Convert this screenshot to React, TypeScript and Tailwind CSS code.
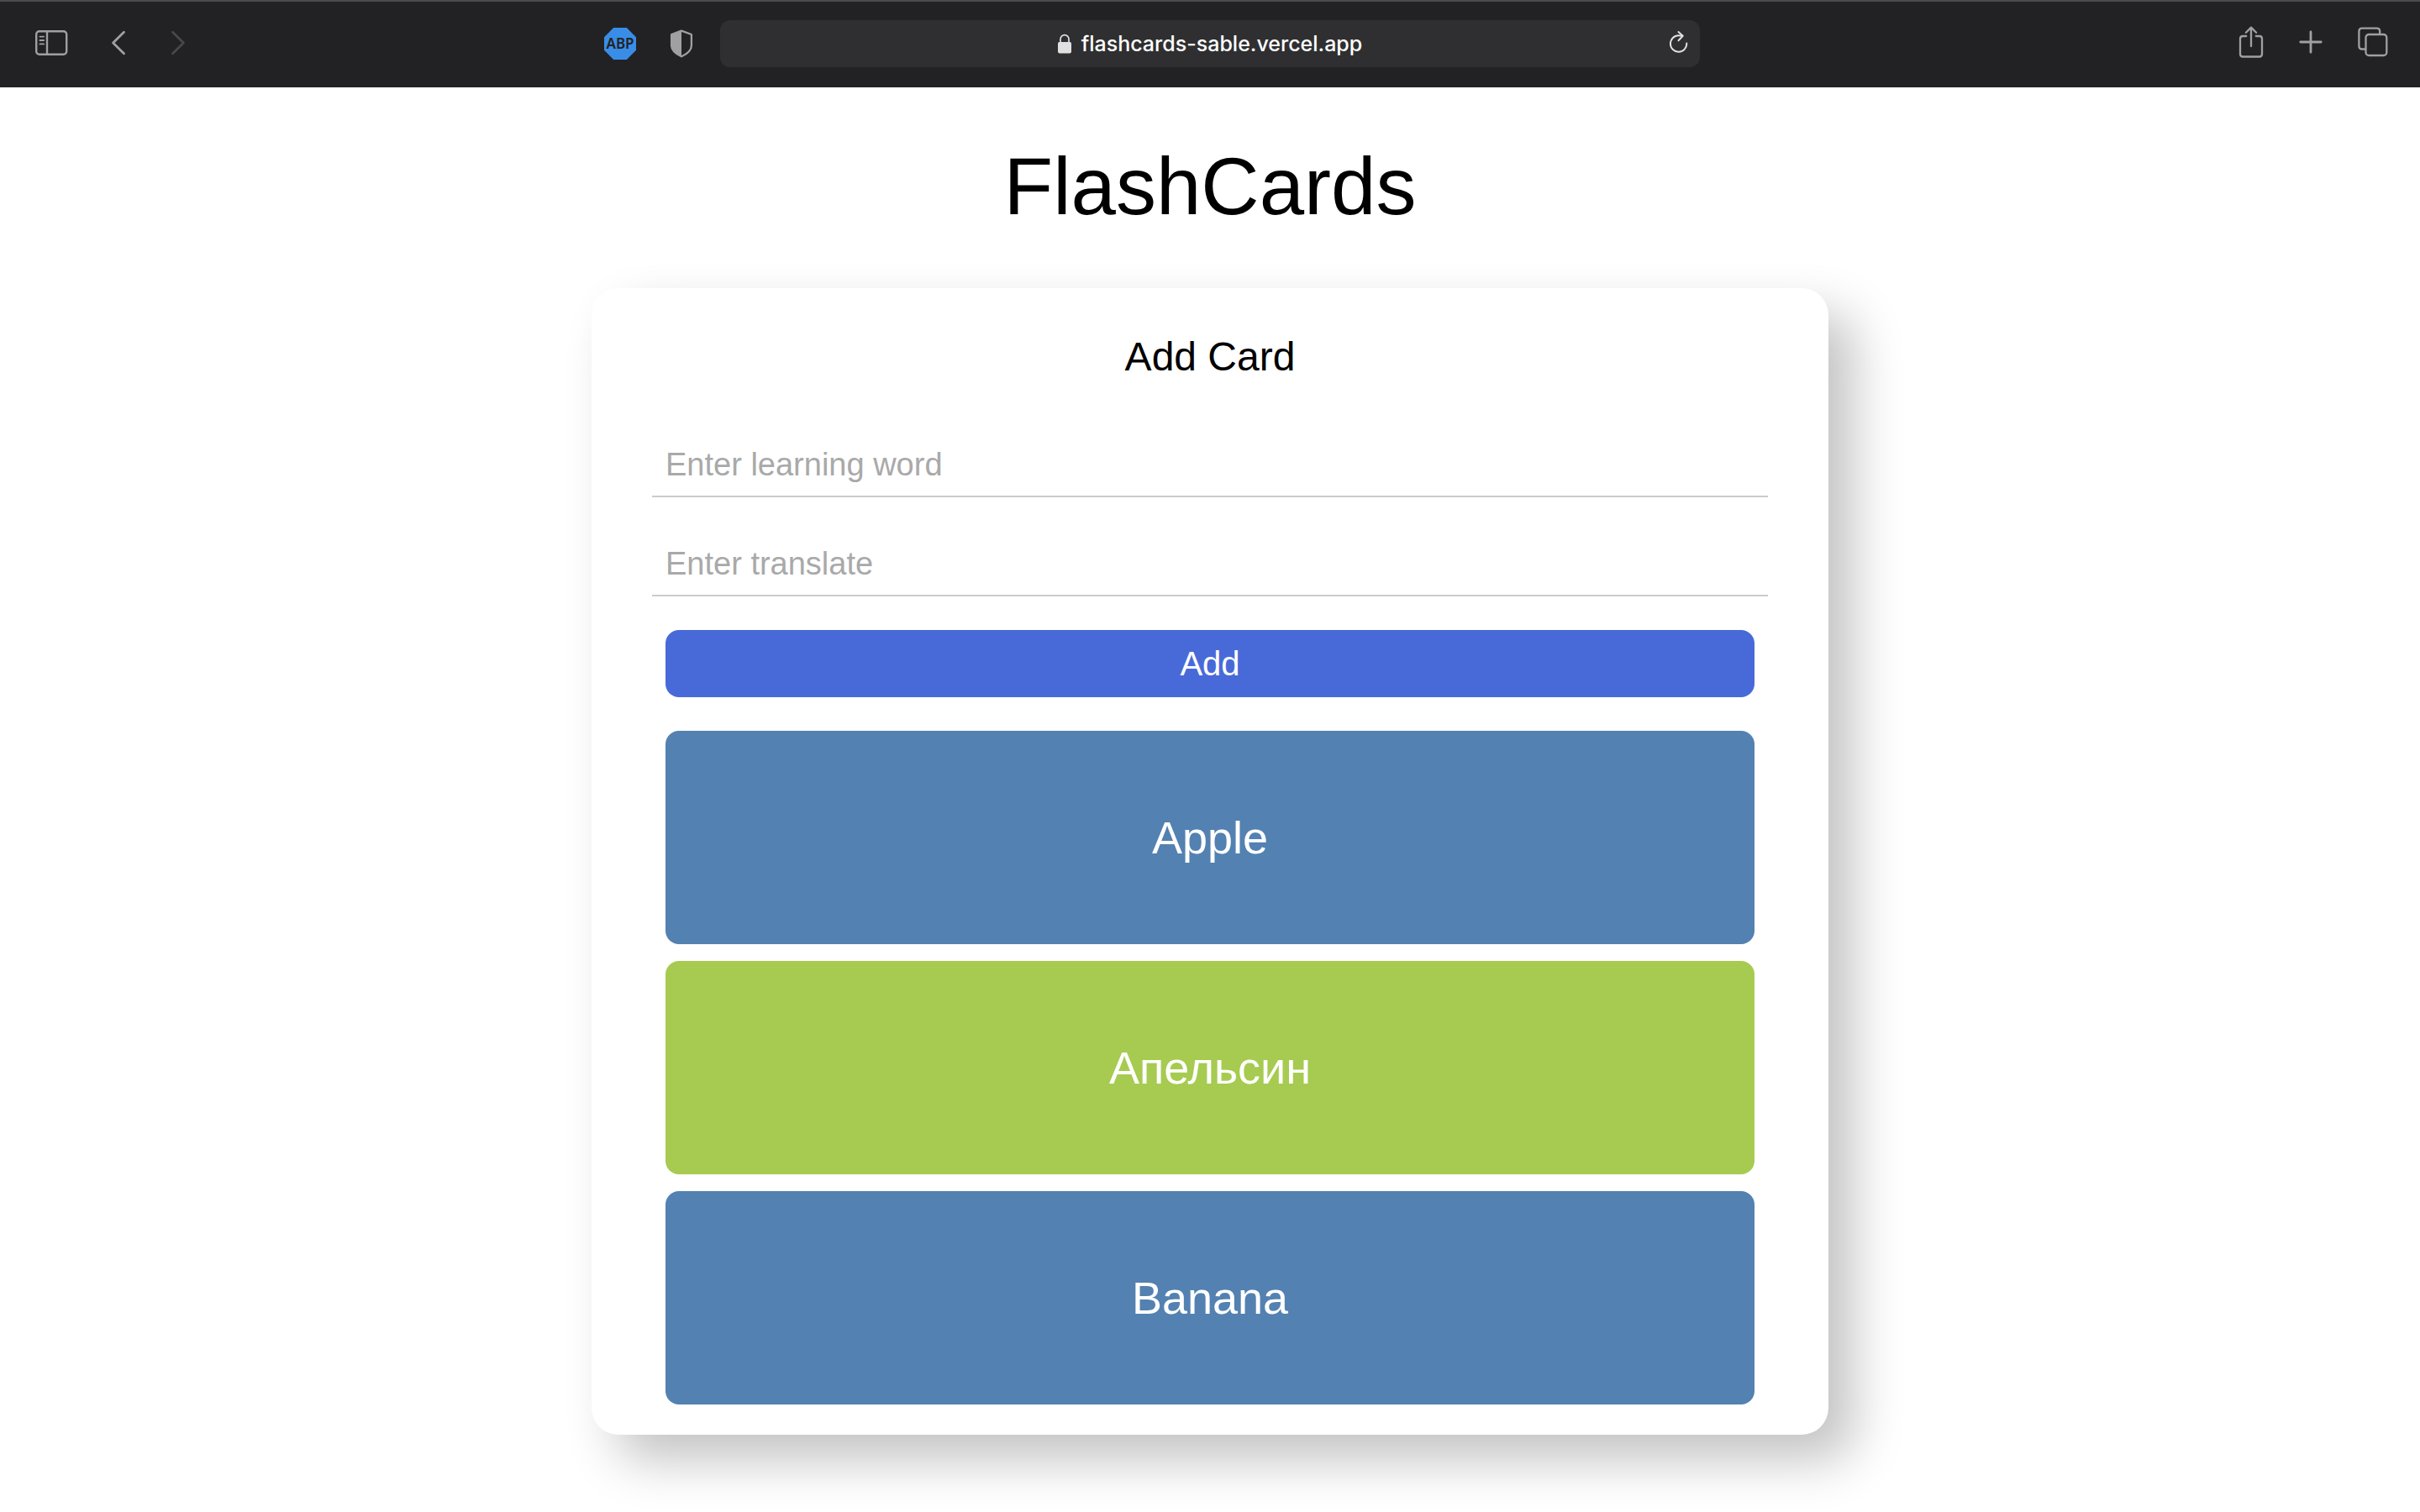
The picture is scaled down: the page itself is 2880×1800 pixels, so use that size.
import { useState } from "react";
import type { FormEvent, ReactNode } from "react";

type Card = { word: string; translation: string; flipped: boolean };

const initialCards: Card[] = [
  { word: "Apple", translation: "Яблоко", flipped: false },
  { word: "Orange", translation: "Апельсин", flipped: true },
  { word: "Banana", translation: "Банан", flipped: false },
];

function IconButton({
  label,
  className = "",
  disabled = false,
  children,
}: {
  label: string;
  className?: string;
  disabled?: boolean;
  children: ReactNode;
}) {
  return (
    <button
      type="button"
      aria-label={label}
      disabled={disabled}
      className={`flex shrink-0 items-center justify-center ${className}`}
    >
      {children}
    </button>
  );
}

function SidebarIcon() {
  return (
    <svg width="40" height="32" viewBox="0 0 40 32" fill="none" stroke="currentColor" strokeWidth="2.4">
      <rect x="2.2" y="2.2" width="36" height="27.6" rx="3.6" />
      <path d="M15 2.5v27" />
      <path d="M6.5 8.6h4.6M6.5 13h4.6M6.5 17.4h4.6" strokeWidth="1.9" strokeLinecap="round" />
    </svg>
  );
}

function ChevronIcon({ direction }: { direction: "left" | "right" }) {
  return (
    <svg width="18" height="32" viewBox="0 0 18 32" fill="none" stroke="currentColor" strokeWidth="2.8" strokeLinecap="round" strokeLinejoin="round">
      <path d={direction === "left" ? "M15.5 3.3 2.6 16l12.9 12.7" : "M2.5 3.3 15.4 16 2.5 28.7"} />
    </svg>
  );
}

function AdBlockIcon() {
  return (
    <svg width="38" height="38" viewBox="0 0 38 38">
      <path d="M11.2 0h15.6L38 11.2v15.6L26.8 38H11.2L0 26.8V11.2z" fill="#398de7" />
      <text
        x="19"
        y="25"
        textAnchor="middle"
        fontFamily="'Noto Sans', sans-serif"
        fontWeight="600"
        fontSize="17"
        fill="#222224"
      >
        ABP
      </text>
    </svg>
  );
}

function ShieldIcon() {
  return (
    <svg width="28" height="34" viewBox="0 0 28 34">
      <path
        d="M14 1.6 25.9 6v13.4c0 5.4-4.6 9.3-11.9 12.9C6.7 28.7 2.1 24.8 2.1 19.4V6z"
        fill="none"
        stroke="currentColor"
        strokeWidth="2.3"
        strokeLinejoin="round"
      />
      <path d="M14 1.6v30.7C6.7 28.7 2.1 24.8 2.1 19.4V6z" fill="currentColor" />
    </svg>
  );
}

function LockIcon() {
  return (
    <svg width="16" height="24" viewBox="0 0 16 24">
      <rect x="0" y="10" width="16" height="13.4" rx="1.8" fill="currentColor" />
      <path d="M3 11V6.6a5 5 0 0 1 10 0V11" fill="none" stroke="currentColor" strokeWidth="1.7" />
    </svg>
  );
}

function ReloadIcon() {
  return (
    <svg width="22" height="28" viewBox="0 0 22 28" fill="none" stroke="currentColor" strokeWidth="2" strokeLinecap="round" strokeLinejoin="round">
      <path d="M20.3 15.5A9.7 9.7 0 1 1 10.6 6.3c1.500 0 3 .1 4.600.5" />
      <path d="M10.500 2l5.200 4.800-5.200 5.400" />
    </svg>
  );
}

function ShareIcon() {
  return (
    <svg width="30" height="38" viewBox="0 0 30 38" fill="none" stroke="currentColor" strokeWidth="2.3" strokeLinecap="round" strokeLinejoin="round">
      <path d="M9.2 12H5.200c-2.200 0-3.200 1-3.200 3.200v18c0 2.200 1 3.300 3.200 3.300h19.600c2.200 0 3.200-1.100 3.200-3.300v-18c0-2.200-1-3.200-3.200-3.200h-4" />
      <path d="M15 24V1.8M8.9 7.700 15 1.600l6.100 6.100" />
    </svg>
  );
}

function PlusIcon() {
  return (
    <svg width="28" height="28" viewBox="0 0 28 28" fill="none" stroke="currentColor" strokeWidth="2.8" strokeLinecap="round">
      <path d="M14 1.8v24.4M1.8 14h24.4" />
    </svg>
  );
}

function TabsIcon() {
  return (
    <svg width="36" height="36" viewBox="0 0 36 36" fill="none" stroke="currentColor" strokeWidth="2.3">
      <rect x="9.5" y="9" width="24.8" height="25" rx="3.8" />
      <path d="M9.500 26.500H5c-2.200 0-3.600-1.300-3.600-3.500V5.200C1.400 3 2.700 1.600 5 1.600h17.600c2.200 0 3.600 1.300 3.600 3.600V9" />
    </svg>
  );
}

function BrowserBar() {
  return (
    <header className="grid h-[104px] grid-cols-[1fr_minmax(0,1166px)_1fr] items-center border-t-2 border-[#4b4b4d] bg-[#222224] pb-0.5 text-[#a0a0a2]">
      <div className="flex items-center pr-8 pl-[41px]">
        <nav aria-label="History" className="flex items-center pb-0.5">
          <IconButton label="Toggle sidebar">
            <SidebarIcon />
          </IconButton>
          <IconButton label="Back" className="ml-[51px]">
            <ChevronIcon direction="left" />
          </IconButton>
          <IconButton label="Forward" className="ml-[53px] text-[#48484a]" disabled>
            <ChevronIcon direction="right" />
          </IconButton>
        </nav>
        <div className="ml-auto flex items-center gap-10">
          <IconButton label="Ad blocker">
            <AdBlockIcon />
          </IconButton>
          <IconButton label="Privacy report">
            <ShieldIcon />
          </IconButton>
        </div>
      </div>

      <div className="grid h-14 grid-cols-[1fr_auto_1fr] items-center rounded-xl bg-[#2f2f31] px-3.5 text-[#e0e0e0]">
        <a
          href="https://flashcards-sable.vercel.app"
          className="col-start-2 flex items-center gap-3 font-['Inter',sans-serif] text-[25px] leading-8 font-medium text-white"
        >
          <span className="text-[#e0e0e0]">
            <LockIcon />
          </span>
          flashcards-sable.vercel.app
        </a>
        <IconButton label="Reload page" className="justify-self-end pb-1">
          <ReloadIcon />
        </IconButton>
      </div>

      <div className="flex items-center justify-end gap-[42px] pr-[38px] pb-1">
        <IconButton label="Share">
          <ShareIcon />
        </IconButton>
        <IconButton label="New tab">
          <PlusIcon />
        </IconButton>
        <IconButton label="Show tabs">
          <TabsIcon />
        </IconButton>
      </div>
    </header>
  );
}

const inputClass =
  "h-[76px] w-full border-b-2 border-[#cbcbcb] bg-transparent px-4 text-[38px] text-black outline-none placeholder:text-[#a9a9a9]";

export default function App() {
  const [cards, setCards] = useState(initialCards);
  const [word, setWord] = useState("");
  const [translation, setTranslation] = useState("");

  const addCard = (event: FormEvent) => {
    event.preventDefault();
    if (!word.trim() || !translation.trim()) return;
    setCards([...cards, { word, translation, flipped: false }]);
    setWord("");
    setTranslation("");
  };

  const flip = (index: number) =>
    setCards(cards.map((card, i) => (i === index ? { ...card, flipped: !card.flipped } : card)));

  return (
    <div className="min-h-screen bg-white font-['Liberation_Sans',Arial,sans-serif] text-black">
      <BrowserBar />
      <main className="flex flex-col items-center px-8 pt-16 pb-20">
        <h1 className="text-[96px] leading-[108px]">FlashCards</h1>

        <section className="mt-[67px] w-full max-w-[1472px] rounded-4xl bg-white px-[72px] pt-14 pb-9 shadow-[30px_30px_60px_rgba(0,0,0,0.24)]">
          <h2 className="text-center text-[48px] leading-[52px]">Add Card</h2>

          <form onSubmit={addCard} className="mt-[65px] flex flex-col">
            <input
              type="text"
              aria-label="Learning word"
              placeholder="Enter learning word"
              value={word}
              onChange={(e) => setWord(e.target.value)}
              className={inputClass}
            />
            <input
              type="text"
              aria-label="Translate"
              placeholder="Enter translate"
              value={translation}
              onChange={(e) => setTranslation(e.target.value)}
              className={`mt-[42px] ${inputClass}`}
            />
            <button type="submit" className="mx-4 mt-10 h-20 rounded-2xl bg-[#486ad9] text-[40px] text-white">
              Add
            </button>
          </form>

          <ul className="mx-4 mt-10 flex flex-col gap-5">
            {cards.map((card, index) => (
              <li key={index} className="flex">
                <button
                  type="button"
                  onClick={() => flip(index)}
                  className={`h-[254px] w-full rounded-2xl text-[54px] text-white ${
                    card.flipped ? "bg-[#a6cb50]" : "bg-[#5381b1]"
                  }`}
                >
                  {card.flipped ? card.translation : card.word}
                </button>
              </li>
            ))}
          </ul>
        </section>
      </main>
    </div>
  );
}
